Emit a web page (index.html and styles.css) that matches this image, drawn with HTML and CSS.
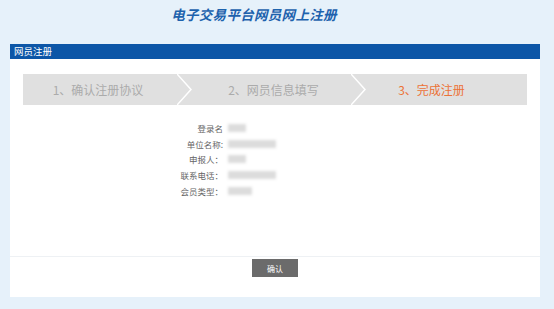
FILE: index.html
```html
<!DOCTYPE html>
<html lang="zh-CN">
<head>
    <meta charset="UTF-8">
    <title>电子交易平台网员网上注册</title>
    <link rel="stylesheet" href="styles.css">
</head>
<body>

<header class="top">
    <h1>电子交易平台网员网上注册</h1>
</header>

<main class="panel">
    <div class="panel-head">网员注册</div>

    <div class="steps">
        <div class="step step-1">1、确认注册协议</div>
        <svg class="arrow" width="15" height="31" viewBox="0 0 15 31"><polyline points="0,0 14,15.5 0,31" fill="none" stroke="#fff" stroke-width="1.5"/></svg>
        <div class="step step-2">2、网员信息填写</div>
        <svg class="arrow" width="15" height="31" viewBox="0 0 15 31"><polyline points="0,0 14,15.5 0,31" fill="none" stroke="#fff" stroke-width="1.5"/></svg>
        <div class="step step-3 active">3、完成注册</div>
    </div>

    <dl class="info">
        <dt>登录名</dt><dd><span class="blur w18"></span></dd>
        <dt>单位名称:</dt><dd><span class="blur w48"></span></dd>
        <dt>申报人：</dt><dd><span class="blur w18"></span></dd>
        <dt>联系电话：</dt><dd><span class="blur w48"></span></dd>
        <dt>会员类型：</dt><dd><span class="blur w24"></span></dd>
    </dl>

    <div class="actions">
        <button class="btn">确认</button>
    </div>
</main>

</body>
</html>
```

FILE: styles.css
```css
body {
    margin: 0;
    padding: 0;
    background-color: #e6f1fa;
    font-family: "Noto Sans CJK SC", "Liberation Sans", sans-serif;
    color: #555;
}
.top {
    height: 44px;
    text-align: center;
    padding-right: 46px;
}
.top h1 {
    margin: 0;
    padding-top: 4px;
    font-size: 13.5px;
    line-height: 20px;
    font-style: italic;
    font-weight: bold;
    color: #1d62ad;
    letter-spacing: 0.3px;
}
.panel {
    margin: 0 14px 0 10px;
    height: 253px;
    background-color: #fff;
    display: flex;
    flex-direction: column;
}
.panel-head {
    height: 15px;
    line-height: 15px;
    background-color: #0c56a7;
    color: #fff;
    font-size: 9.5px;
    padding-left: 4px;
}
.steps {
    display: flex;
    margin: 15px 13px 0 13px;
    height: 31px;
    background-color: #e0e0e0;
}
.step {
    line-height: 31px;
    font-size: 12px;
    color: #ababab;
    text-align: center;
}
.step-1 {
    width: 154px;
    padding-right: 4px;
    box-sizing: border-box;
}
.step-2 {
    width: 159px;
    padding-left: 4px;
    box-sizing: border-box;
}
.step-3 {
    flex: 1;
    padding-right: 30px;
}
.step.active {
    color: #ec7237;
}
.arrow {
    flex: none;
    display: block;
}
.info {
    display: grid;
    grid-template-columns: 63px 80px;
    grid-auto-rows: 15.8px;
    column-gap: 5px;
    margin: 15px 0 0 150px;
    font-size: 8.5px;
    align-items: center;
}
.info dt {
    text-align: right;
    color: #666;
}
.info dd {
    margin: 0;
    display: flex;
    align-items: center;
}
.blur {
    display: inline-block;
    height: 8px;
    background-color: #dcdcdc;
    filter: blur(1.5px);
}
.w18 { width: 18px; }
.w24 { width: 24px; }
.w48 { width: 48px; }
.actions {
    margin-top: auto;
    border-top: 1px solid #eef1f4;
    height: 38px;
    display: flex;
    justify-content: center;
    padding-top: 2px;
}
.btn {
    width: 46px;
    height: 18px;
    padding: 0;
    border: none;
    background-color: #6b6b6b;
    color: #fff;
    font-family: "Noto Sans CJK SC", sans-serif;
    font-size: 8px;
}
```
